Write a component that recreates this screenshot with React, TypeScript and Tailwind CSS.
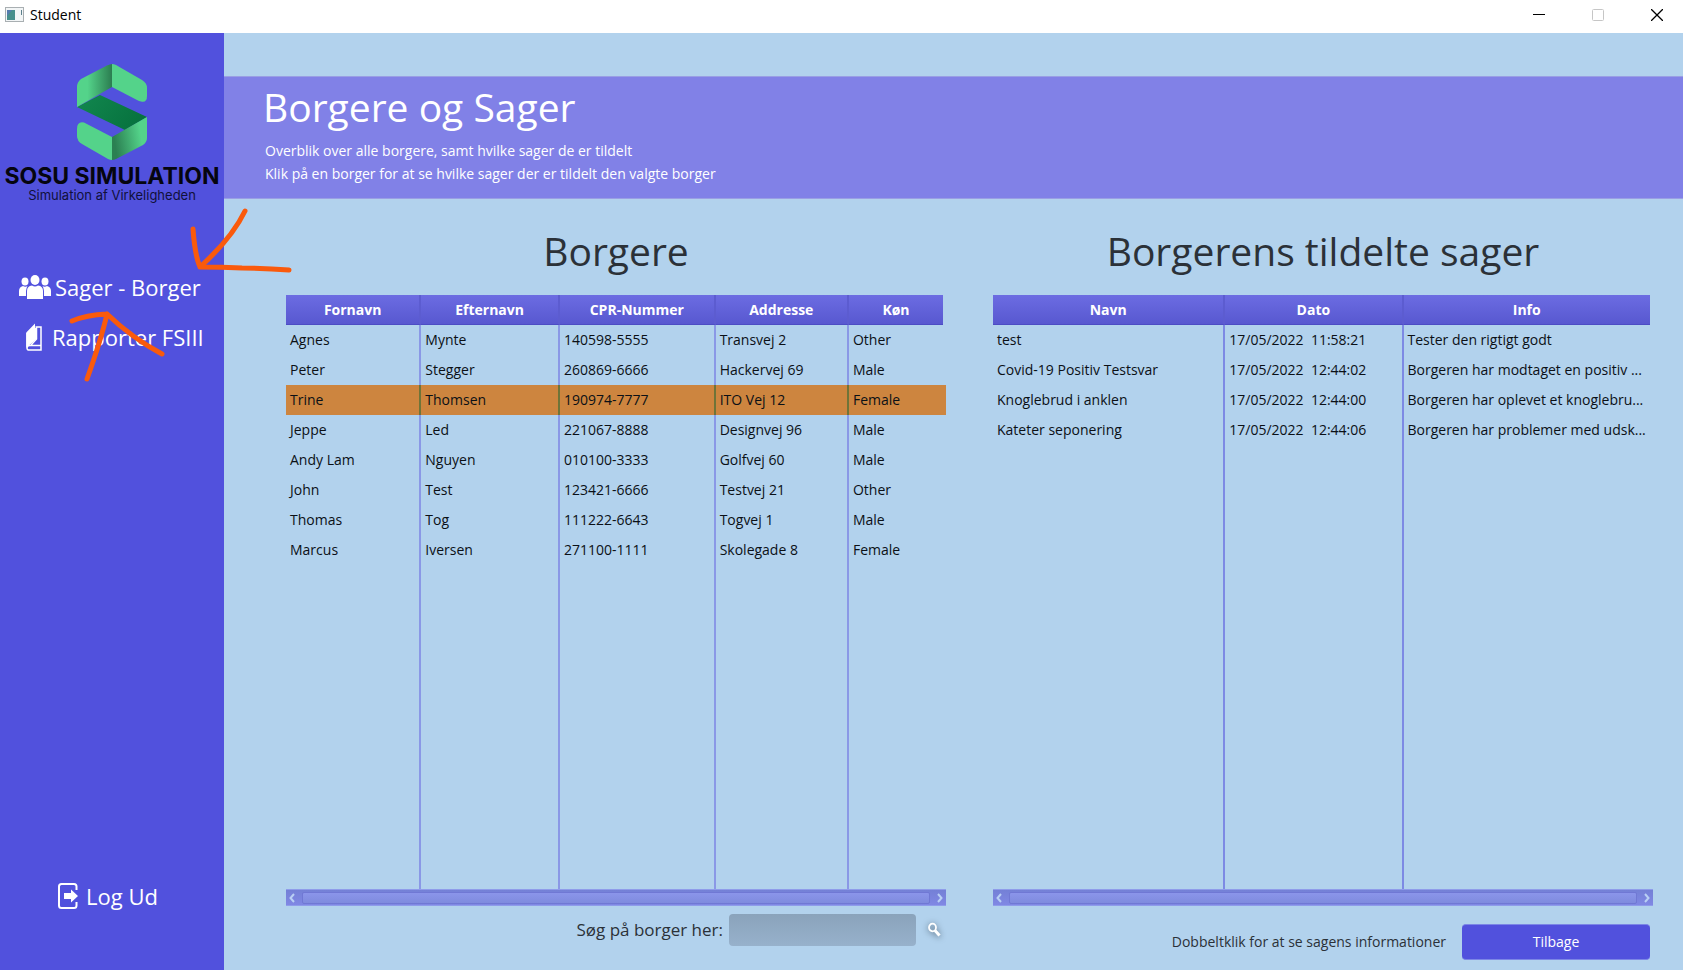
import React from "react";

const citizens = [
  ["Agnes", "Mynte", "140598-5555", "Transvej 2", "Other"],
  ["Peter", "Stegger", "260869-6666", "Hackervej 69", "Male"],
  ["Trine", "Thomsen", "190974-7777", "ITO Vej 12", "Female"],
  ["Jeppe", "Led", "221067-8888", "Designvej 96", "Male"],
  ["Andy Lam", "Nguyen", "010100-3333", "Golfvej 60", "Male"],
  ["John", "Test", "123421-6666", "Testvej 21", "Other"],
  ["Thomas", "Tog", "111222-6643", "Togvej 1", "Male"],
  ["Marcus", "Iversen", "271100-1111", "Skolegade 8", "Female"],
];

const cases = [
  ["test", "17/05/2022  11:58:21", "Tester den rigtigt godt"],
  ["Covid-19 Positiv Testsvar", "17/05/2022  12:44:02", "Borgeren har modtaget en positiv ..."],
  ["Knoglebrud i anklen", "17/05/2022  12:44:00", "Borgeren har oplevet et knoglebru..."],
  ["Kateter seponering", "17/05/2022  12:44:06", "Borgeren har problemer med udsk..."],
];

type TableProps = {
  label: string;
  columns: { title: string; width: string }[];
  rows: string[][];
  selected?: number;
  line: string;
};

function DataTable({ label, columns, rows, selected, line }: TableProps) {
  const last = columns.length - 1;
  return (
    <div className="grid grow">
      <table aria-label={label} className="h-full w-full table-fixed border-separate border-spacing-0 text-left text-sm text-[#0b1016]">
        <colgroup>
          {columns.map((c) => (
            <col key={c.title} className={c.width} />
          ))}
          <col className="w-[3px]" />
        </colgroup>
        <thead>
          <tr className="h-[30px]">
            {columns.map((c, i) => (
              <th
                key={c.title}
                className={`border-b border-b-[#4c4cc4] bg-linear-to-b from-[#6c6ce2] to-[#5858d0] p-0 pt-px text-center font-bold text-white ${i < last ? "border-r-2 border-r-[#5c5cd0]" : ""}`}
              >
                {c.title}
              </th>
            ))}
            <td className="p-0" />
          </tr>
        </thead>
        <tbody>
          {rows.map((row, r) => (
            <tr key={row[0]} className={`h-[30px] ${r === selected ? "bg-[#cd853f]" : ""}`}>
              {row.map((cell, i) => (
                <td
                  key={i}
                  className={`overflow-hidden py-0 pr-0 pl-1 whitespace-pre ${i < last ? `border-r-2 ${r === selected ? "border-r-[#6f7438]" : line}` : ""}`}
                >
                  {cell}
                </td>
              ))}
              <td className="p-0" />
            </tr>
          ))}
          <tr aria-hidden="true">
            {columns.map((c, i) => (
              <td key={c.title} className={`p-0 ${i < last ? `border-r-2 ${line}` : ""}`} />
            ))}
            <td className="p-0" />
          </tr>
        </tbody>
      </table>
    </div>
  );
}

function ScrollArrow({ d, label }: { d: string; label: string }) {
  return (
    <button type="button" aria-label={label} className="flex h-4 w-3 items-center justify-center">
      <svg width="6" height="10" viewBox="0 0 6 10" fill="none" stroke="#b9d0f4" strokeWidth="2">
        <path d={d} />
      </svg>
    </button>
  );
}

function ScrollBar() {
  return (
    <div className="flex h-[17px] items-center border-y border-[#8f9cea] bg-linear-to-b from-[#7480d6] to-[#8088e4]">
      <ScrollArrow d="M5 1 1.500 5 5 9" label="Rul til venstre" />
      <div className="mx-1 h-3 grow rounded-xs border border-[#7078d4] bg-linear-to-b from-[#8b95ea] to-[#7f8bde]" />
      <ScrollArrow d="M1 1 4.500 5 1 9" label="Rul til højre" />
    </div>
  );
}

function Logo() {
  return (
    <svg width="72" height="96" viewBox="0 0 72 96" aria-hidden="true">
      <defs>
        <linearGradient id="top" x1="0" x2="1" y1="0" y2="0">
          <stop offset="0.3" stopColor="#54d38a" />
          <stop offset="1" stopColor="#2b7d50" />
        </linearGradient>
        <linearGradient id="bottom" x1="0" x2="1" y1="0.2" y2="0">
          <stop offset="0" stopColor="#2b8052" />
          <stop offset="0.75" stopColor="#54d38a" />
        </linearGradient>
        <linearGradient id="middle" x1="0" x2="1" y1="0" y2="0.4">
          <stop offset="0" stopColor="#12874f" />
          <stop offset="1" stopColor="#07733f" />
        </linearGradient>
      </defs>
      <path d="M1 43 24 31 71 53 49 66Z" fill="url(#middle)" />
      <path d="M36 0v23L1 43V23q0-5 4-8L31 1.500Q34 0 36 0Z" fill="url(#top)" />
      <path d="M36 0q2 0 4 1l26 15q5 3 5 8v8q0 7-6 5.500-2-.5-4-1.500L36 23Z" fill="#54d38a" />
      <path d="M36 96V73L71 53v21q0 4-4 7L41 94.500Q38 96 36 96Z" fill="url(#bottom)" />
      <path d="M36 96q-2 0-4-1L6 80q-5-3-5-8v-7q0-8 7-6.500L36 73Z" fill="#54d38a" />
    </svg>
  );
}

function PeopleIcon() {
  return (
    <svg width="32" height="24" viewBox="0 0 32 24" fill="#fff" aria-hidden="true">
      <ellipse cx="16" cy="5" rx="4.500" ry="5" />
      <ellipse cx="6" cy="6.500" rx="3.500" ry="4" />
      <ellipse cx="26" cy="6.500" rx="3.500" ry="4" />
      <path d="M8 24v-8q0-5 5-5.500 3 2 6 0 5 .5 5 5.500v8Z" />
      <path d="M0 21v-5q0-4 4-5 2 1.200 4.500.2-1.500 2-1.500 4.800v5ZM32 21v-5q0-4-4-5-2 1.200-4.500.2 1.500 2 1.500 4.800v5Z" />
    </svg>
  );
}

function BookIcon() {
  return (
    <svg width="16" height="28" viewBox="0 0 16 28" fill="none" stroke="#fff" strokeWidth="1.500" aria-hidden="true">
      <path d="M.3 9.500 9 .5V5l1.300-.2V16L3 22.500Q.3 23 .3 25Z" fill="#fff" stroke="none" />
      <path d="M9.500 4H15v18.500H3.500Q1 22.800 1 25t2.500 2H15v-4.500M1 25V10M10.500 4v12L5 22" />
    </svg>
  );
}

function LogoutIcon() {
  return (
    <svg width="20" height="26" viewBox="0 0 20 26" fill="none" aria-hidden="true">
      <path d="M18.500 7V3.500Q18.500 1 16 1H3.500Q1 1 1 3.500v19Q1 25 3.500 25H16q2.500 0 2.500-2.500V19" stroke="#fff" strokeWidth="2" />
      <path d="M6 10h7V6.500l7 6.500-7 6.500V16H6Z" fill="#fff" />
    </svg>
  );
}

function SearchIcon() {
  return (
    <svg width="24" height="24" viewBox="0 0 24 24" fill="none" stroke="#fff" className="drop-shadow-[0_1px_3px_#44586a]" aria-hidden="true">
      <ellipse cx="10.500" cy="9.500" rx="3.500" ry="3.800" strokeWidth="1.800" />
      <path d="m13 12.500 4.500 5" strokeWidth="3" />
    </svg>
  );
}

export default function App() {
  return (
    <div className="relative flex min-h-screen flex-col bg-[#b2d2ed] font-['Open_Sans','Noto_Sans',sans-serif]">
      <header className="flex h-[33px] items-center bg-white pr-5 pb-1 pl-[5px]">
        <svg width="19" height="15" viewBox="0 0 19 15" aria-hidden="true">
          <rect x=".5" y=".5" width="18" height="14" fill="#f2f5f6" stroke="#a9afb2" />
          <rect x="2" y="3" width="8" height="10" fill="#478f8c" />
          <path d="M2 3h5L2 9Z" fill="#557cae" />
          <path d="M16.500 3v5" stroke="#5b7f8c" />
        </svg>
        <span className="ml-[6px] grow text-sm text-black">Student</span>
        <div className="flex gap-[47px]">
          <button type="button" aria-label="Minimer">
            <svg width="12" height="12" viewBox="0 0 12 12"><path d="M0 5.500h12" stroke="#000" /></svg>
          </button>
          <button type="button" aria-label="Maksimer" disabled>
            <svg width="12" height="12" viewBox="0 0 12 12"><rect x=".5" y=".5" width="11" height="11" rx="1" fill="none" stroke="#c6c6c6" /></svg>
          </button>
          <button type="button" aria-label="Luk">
            <svg width="12" height="12" viewBox="0 0 12 12"><path d="m0 0 12 12M12 0 0 12" stroke="#000" strokeWidth="1.300" /></svg>
          </button>
        </div>
      </header>

      <div className="flex grow">
        <aside className="flex w-56 shrink-0 flex-col items-center bg-[#5151dd] pt-[31px] pb-[58px]">
          <Logo />
          <p className="mt-1 font-['Inter',sans-serif] text-[23px] leading-6 font-bold whitespace-nowrap text-[#05050f]">SOSU SIMULATION</p>
          <p className="font-['Inter',sans-serif] text-[13px] leading-[14px] whitespace-nowrap text-[#10103a]">Simulation af Virkeligheden</p>
          <nav className="mt-[69px] flex w-full flex-col gap-[18px] px-[19px] text-[22px] leading-8 text-white">
            <a href="#sager" className="flex items-center gap-1 whitespace-nowrap">
              <PeopleIcon />
              Sager - Borger
            </a>
            <a href="#rapporter" className="flex items-center gap-[10px] pl-[7px] whitespace-nowrap">
              <BookIcon />
              Rapporter FSIII
            </a>
          </nav>
          <a href="#logud" className="mt-auto mr-2 flex items-center gap-2 text-[22px] leading-8 text-white">
            <LogoutIcon />
            Log Ud
          </a>
        </aside>

        <main className="flex min-w-0 grow flex-col pt-[43px]">
          <section className="h-[123px] border-y border-[#9a9fe4] bg-[#8181e7] pt-[2px] pl-[39px] text-white">
            <h1 className="text-[39px] leading-[56px]">Borgere og Sager</h1>
            <p className="pt-1 pl-[2px] text-sm leading-[23px]">
              Overblik over alle borgere, samt hvilke sager de er tildelt
              <br />
              Klik på en borger for at se hvilke sager der er tildelt den valgte borger
            </p>
          </section>

          <div className="grid grow grid-cols-2 gap-[47px] pr-[30px] pl-[62px]">
            <section className="flex flex-col">
              <h2 className="pt-6 pb-4 text-center text-[39px] leading-[56px] text-[#2b3138]">Borgere</h2>
              <DataTable
                label="Borgere"
                columns={[
                  { title: "Fornavn", width: "w-[20.5%]" },
                  { title: "Efternavn", width: "w-[21%]" },
                  { title: "CPR-Nummer", width: "w-[23.6%]" },
                  { title: "Addresse", width: "w-[20.2%]" },
                  { title: "Køn", width: "w-auto" },
                ]}
                rows={citizens}
                selected={2}
                line="border-r-[#8a98e6]"
              />
              <ScrollBar />
              <div className="flex h-16 items-start justify-end pt-2">
                <label htmlFor="search" className="pr-[6px] text-[17px] leading-8 text-[#2b3138]">Søg på borger her:</label>
                <input id="search" type="text" className="h-8 w-[187px] rounded-sm bg-linear-to-b from-[#8aa3bb] to-[#97b1cb]" />
                <button type="button" aria-label="Søg" className="ml-[6px] flex h-8 items-center">
                  <SearchIcon />
                </button>
              </div>
            </section>

            <section className="flex flex-col">
              <h2 className="pt-6 pb-4 text-center text-[39px] leading-[56px] text-[#2b3138]">Borgerens tildelte sager</h2>
              <DataTable
                label="Borgerens tildelte sager"
                columns={[
                  { title: "Navn", width: "w-[35.2%]" },
                  { title: "Dato", width: "w-[27%]" },
                  { title: "Info", width: "w-auto" },
                ]}
                rows={cases}
                line="border-r-[#7d8ae4]"
              />
              <ScrollBar />
              <div className="flex h-16 items-start justify-end pt-[18px] pr-[3px]">
                <p className="pr-4 text-sm leading-9 text-[#2b3138]">Dobbeltklik for at se sagens informationer</p>
                <button type="button" className="h-9 w-[188px] rounded-sm border-y border-[#7c86e6] bg-[#5151dd] text-sm text-white">Tilbage</button>
              </div>
            </section>
          </div>
        </main>
      </div>

      <svg
        className="pointer-events-none absolute top-[200px] left-[60px]"
        width="240"
        height="190"
        viewBox="60 200 240 190"
        fill="none"
        stroke="#fa5a0c"
        strokeWidth="5"
        strokeLinecap="round"
        strokeLinejoin="round"
        aria-hidden="true"
      >
        <path d="M193 229Q195 256 200 267Q232 238 245 211M200 267Q222 267 242 268Q266 268 289 270" />
        <path d="M72 321Q86 315 107 314Q101 340 87 379M107 314Q132 338 162 354" />
      </svg>
    </div>
  );
}
